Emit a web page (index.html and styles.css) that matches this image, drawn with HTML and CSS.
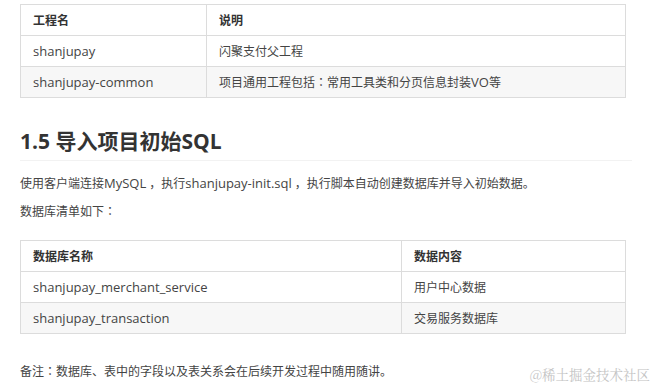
FILE: index.html
```html
<!DOCTYPE html>
<html lang="zh-CN">
<head>
<meta charset="utf-8">
<link rel="stylesheet" href="styles.css">
</head>
<body>
<div class="doc">
  <table class="grid grid-proj">
    <thead>
      <tr><th class="c1"><span class="zh">工程名</span></th><th><span class="zh">说明</span></th></tr>
    </thead>
    <tbody>
      <tr><td class="c1">shanjupay</td><td><span class="zh">闪聚支付父工程</span></td></tr>
      <tr class="alt"><td class="c1">shanjupay-common</td><td><span class="zh">项目通用工程包括<span class="pc" lang="zh-TW">：</span>常用工具类和分页信息封装</span>VO<span class="zh">等</span></td></tr>
    </tbody>
  </table>

  <h2 class="title">1.5 导入项目初始SQL</h2>

  <p class="para p1"><span class="zh">使用客户端连接</span>MySQL<span class="zh cm">，</span><span class="zh">执行</span>shanjupay-init.sql<span class="zh cm">，</span><span class="zh">执行脚本自动创建数据库并导入初始数据。</span></p>
  <p class="para p2"><span class="zh">数据库清单如下<span class="pc" lang="zh-TW">：</span></span></p>

  <table class="grid grid-db">
    <thead>
      <tr><th class="c1"><span class="zh">数据库名称</span></th><th><span class="zh">数据内容</span></th></tr>
    </thead>
    <tbody>
      <tr><td class="c1">shanjupay_merchant_service</td><td><span class="zh">用户中心数据</span></td></tr>
      <tr class="alt"><td class="c1">shanjupay_transaction</td><td><span class="zh">交易服务数据库</span></td></tr>
    </tbody>
  </table>

  <p class="para note"><span class="zh">备注<span class="pc" lang="zh-TW">：</span>数据库、表中的字段以及表关系会在后续开发过程中随用随讲。</span></p>
</div>
<div class="watermark">@稀土掘金技术社区</div>
</body>
</html>
```

FILE: styles.css
```css
html, body {
  margin: 0;
  padding: 0;
  background: #ffffff;
}
body {
  font-family: "Open Sans", "Noto Sans CJK SC", sans-serif;
  font-size: 13px;
  color: #333333;
  width: 656px;
  height: 389px;
  overflow: hidden;
  position: relative;
}
.zh {
  font-size: 12px;
}
.pc {
  font-family: "Noto Sans CJK TC", "Noto Sans CJK SC", sans-serif;
}
.cm {
  padding-left: 3px;
}
.doc {
  padding: 4px 0 0 20px;
  width: 612px;
}
.grid {
  border-collapse: collapse;
  width: 606px;
  table-layout: fixed;
}
.grid th, .grid td {
  border: 1px solid #dcdcdc;
  height: 31px;
  padding: 0 12px;
  text-align: left;
  vertical-align: middle;
  box-sizing: border-box;
  white-space: nowrap;
  color: #444;
}
.grid th {
  font-weight: 700;
  color: #333;
}
.grid .alt td {
  background: #f7f7f7;
}
.grid-proj .c1 { width: 186px; }
.grid-db .c1 { width: 381px; }
.title {
  margin: 28px 0 0 0;
  font-size: 21px;
  line-height: 30px;
  font-weight: 700;
  color: #333;
  padding-bottom: 4px;
  border-bottom: 1px solid #f2f2f2;
}
.para {
  margin: 0;
  line-height: 22px;
  color: #444;
}
.p1 { margin-top: 11px; }
.p2 { margin-top: 5px; }
.grid-db { margin-top: 17px; }
.note { margin-top: 26px; }
.watermark {
  position: absolute;
  right: 6px;
  bottom: 5px;
  font-family: "Noto Serif CJK SC", "Noto Sans CJK SC", serif;
  font-size: 13.5px;
  color: #c4c4c4;
}
```
